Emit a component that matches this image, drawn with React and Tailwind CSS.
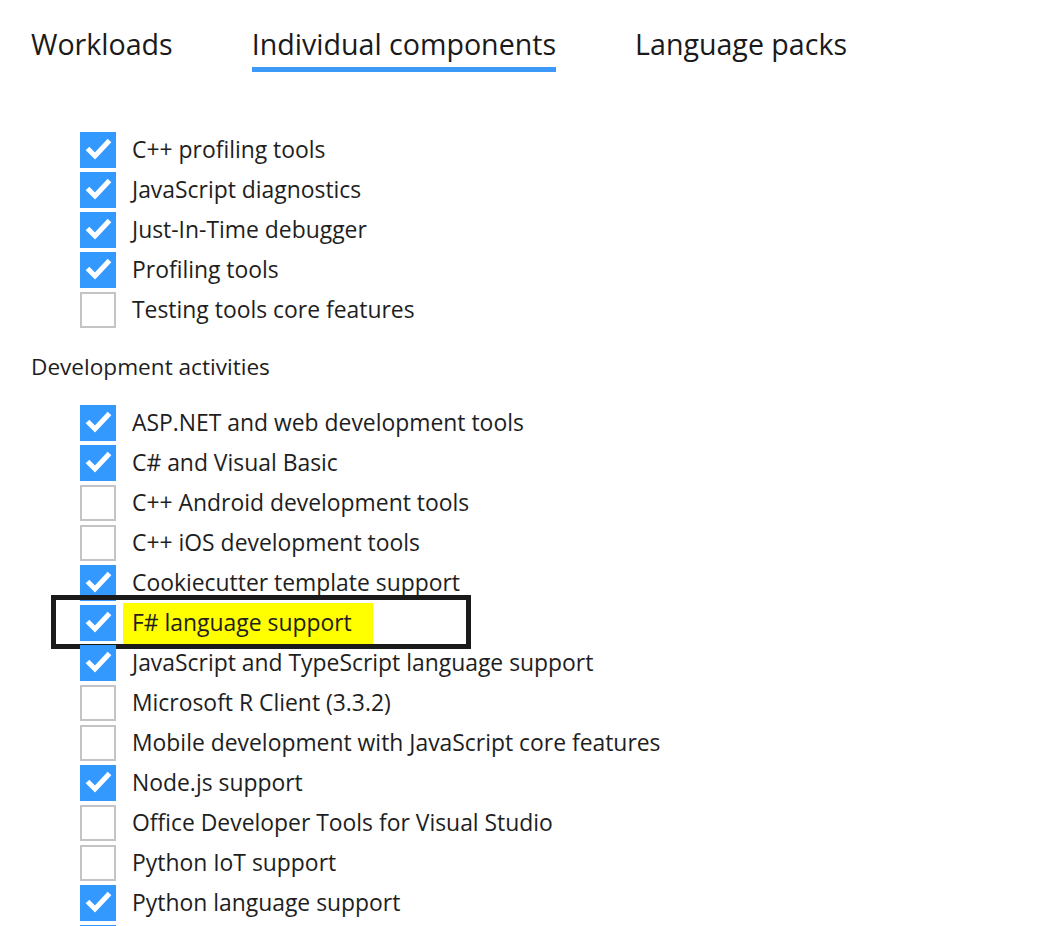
import React from "react";

const top = [
  { label: "C++ profiling tools", on: true },
  { label: "JavaScript diagnostics", on: true },
  { label: "Just-In-Time debugger", on: true },
  { label: "Profiling tools", on: true },
  { label: "Testing tools core features", on: false },
];

const dev = [
  { label: "ASP.NET and web development tools", on: true },
  { label: "C# and Visual Basic", on: true },
  { label: "C++ Android development tools", on: false },
  { label: "C++ iOS development tools", on: false },
  { label: "Cookiecutter template support", on: true },
  { label: "F# language support", on: true, mark: true },
  { label: "JavaScript and TypeScript language support", on: true },
  { label: "Microsoft R Client (3.3.2)", on: false },
  { label: "Mobile development with JavaScript core features", on: false },
  { label: "Node.js support", on: true },
  { label: "Office Developer Tools for Visual Studio", on: false },
  { label: "Python IoT support", on: false },
  { label: "Python language support", on: true },
  { label: "", on: true },
];

const Box = ({ on }) =>
  on ? (
    <div className="w-9 h-9 shrink-0 bg-[#3399ff] flex items-center justify-center">
      <svg width="36" height="36" viewBox="0 0 36 36">
        <polyline points="7.5,16.5 15,24 29.5,8.5" fill="none" stroke="#fff" strokeWidth="5" />
      </svg>
    </div>
  ) : (
    <div className="w-9 h-9 shrink-0 border-2 border-[#c4c4c4] bg-white" />
  );

const Row = ({ item }) => (
  <div className="relative flex items-center h-10 gap-4">
    <Box on={item.on} />
    {item.mark ? (
      <>
        <span className="-ml-[9px] pl-[9px] w-[250px] h-[41px] flex items-center bg-[#ffff00]">{item.label}</span>
        {/* annotation frame */}
        <div className="absolute -left-[29px] -top-[8px] w-[420px] h-[54px] border-[5px] border-[#1a1a1a]" />
      </>
    ) : (
      <span>{item.label}</span>
    )}
  </div>
);

export default function App() {
  return (
    <div className="w-[1043px] h-[926px] overflow-hidden bg-white text-[#1e1e1e]" style={{ fontFamily: '"Open Sans", "Noto Sans", sans-serif' }}>
      <div className="flex gap-[79px] pl-[31px] pt-[24px] text-[28.6px] leading-[40px] text-[#1a1a1a]">
        <div>Workloads</div>
        <div className="flex flex-col">
          <span>Individual components</span>
          <div className="h-[5px] mt-[3px] bg-[#3c99f8]" />
        </div>
        <div>Language packs</div>
      </div>

      <div className="pl-[80px] pt-[58px] text-[22.9px]">
        {top.map((t) => (
          <Row key={t.label} item={t} />
        ))}
      </div>

      <div className="pl-[31px] mt-[17px] mb-4 h-10 leading-10 text-[22.6px]">Development activities</div>

      <div className="pl-[80px] text-[22.9px]">
        {dev.map((t, i) => (
          <Row key={i} item={t} />
        ))}
      </div>
    </div>
  );
}
